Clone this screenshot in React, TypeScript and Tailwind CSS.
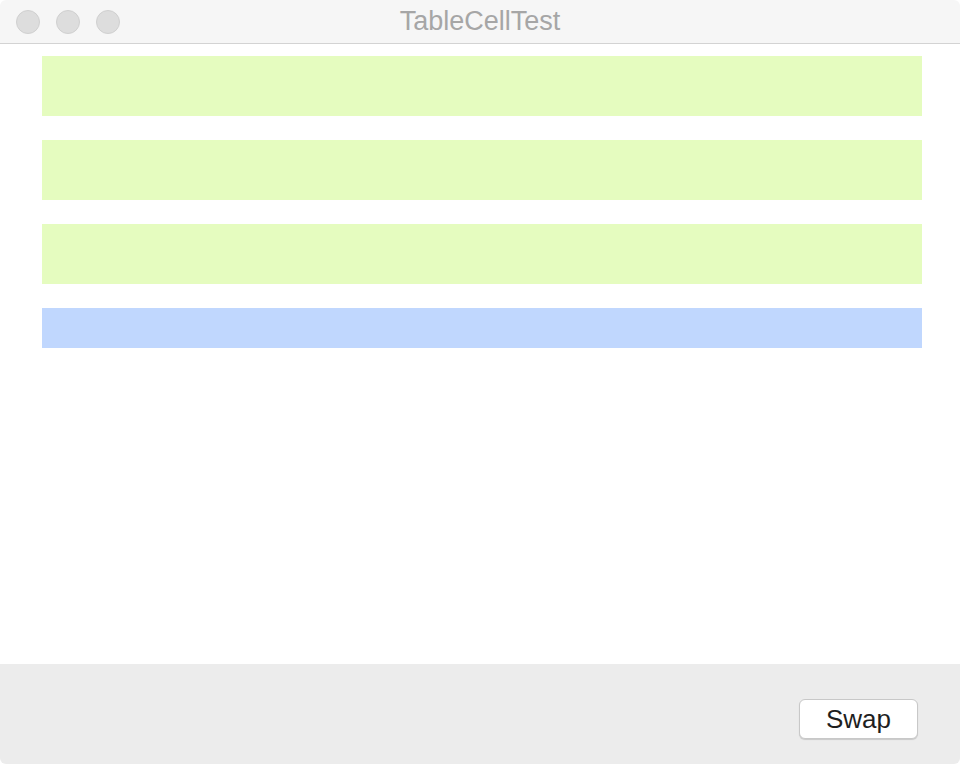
const rows = [
  { h: "h-[60px]", color: "bg-[#e5fcbf]" },
  { h: "h-[60px]", color: "bg-[#e5fcbf]" },
  { h: "h-[60px]", color: "bg-[#e5fcbf]" },
  { h: "h-[40px]", color: "bg-[#c0d7fe]" },
];

export default function App() {
  return (
    <div className="w-[960px] h-[764px] flex flex-col bg-white rounded-[6px] overflow-hidden font-['Liberation_Sans',sans-serif]">
      <div className="h-[44px] shrink-0 flex items-center relative bg-[#f6f6f6] border-b border-[#d3d3d3]">
        <div className="flex gap-4 pl-4">
          <div className="size-6 rounded-full bg-[#dddddd] border border-[#d0d0d0]" />
          <div className="size-6 rounded-full bg-[#dddddd] border border-[#d0d0d0]" />
          <div className="size-6 rounded-full bg-[#dddddd] border border-[#d0d0d0]" />
        </div>
        <div className="absolute inset-0 flex items-center justify-center text-[27px] text-[#a6a6a6] pointer-events-none">
          TableCellTest
        </div>
      </div>
      <div className="flex-1 flex flex-col gap-6 pl-[42px] pr-[38px] pt-3">
        {rows.map((r, i) => (
          <div key={i} className={`${r.h} ${r.color} w-full`} />
        ))}
      </div>
      <div className="h-[100px] shrink-0 bg-[#ececec] flex items-start justify-end pr-[42px] pt-[35px]">
        <button className="w-[119px] h-[40px] bg-white rounded-[6px] border border-[#c8c8c8] shadow-[0_1px_1px_rgba(0,0,0,0.15)] text-[26px] text-[#1e1e1e]">
          Swap
        </button>
      </div>
    </div>
  );
}
